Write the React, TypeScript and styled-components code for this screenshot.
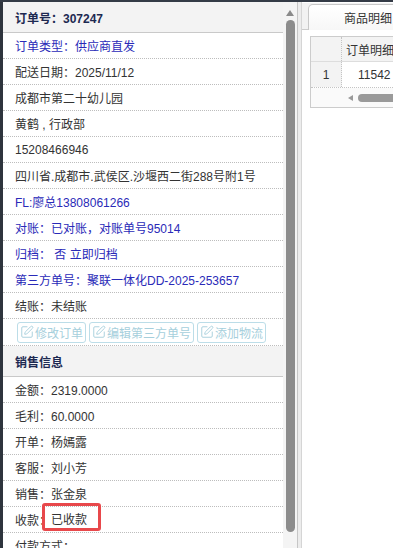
import styled, { createGlobalStyle } from "styled-components";
import { SquarePen } from "lucide-react";

const GlobalStyle = createGlobalStyle`
  html, body {
    margin: 0;
    padding: 0;
  }
  body {
    font-family: "Liberation Sans", "Noto Sans CJK SC", sans-serif;
    font-size: 12px;
    color: #333;
    background: #fff;
  }
`;

type Tone = "plain" | "link";

interface InfoLine {
  text: string;
  tone?: Tone;
}

const orderLines: InfoLine[] = [
  { text: "订单类型：供应商直发", tone: "link" },
  { text: "配送日期：2025/11/12" },
  { text: "成都市第二十幼儿园" },
  { text: "黄鹤 , 行政部" },
  { text: "15208466946" },
  { text: "四川省.成都市.武侯区.沙堰西二街288号附1号" },
  { text: "FL:廖总13808061266", tone: "link" },
  { text: "对账：已对账，对账单号95014", tone: "link" },
  { text: "归档： 否 立即归档", tone: "link" },
  { text: "第三方单号：聚联一体化DD-2025-253657", tone: "link" },
  { text: "结账：未结账" },
];

const salesLines: InfoLine[] = [
  { text: "金额：2319.0000" },
  { text: "毛利：60.0000" },
  { text: "开单：杨嫣露" },
  { text: "客服：刘小芳" },
  { text: "销售：张金泉" },
];

const actions = ["修改订单", "编辑第三方单号", "添加物流"];

const App = () => (
  <>
    <GlobalStyle />
    <Frame>
      <TopBar />
      <Body>
        <LeftEdge />
        <InfoPanel>
          <SectionHeader>订单号：307247</SectionHeader>
          {orderLines.map((line) => (
            <Row key={line.text} $tone={line.tone ?? "plain"}>
              {line.text}
            </Row>
          ))}
          <ButtonRow>
            {actions.map((label) => (
              <ActionButton key={label} type="button">
                <SquarePen size={14} strokeWidth={1.6} />
                {label}
              </ActionButton>
            ))}
          </ButtonRow>
          <SectionHeader>销售信息</SectionHeader>
          {salesLines.map((line) => (
            <Row key={line.text} $tone="plain">
              {line.text}
            </Row>
          ))}
          <Row $tone="plain">
            收款：<Marked>已收款</Marked>
          </Row>
          <Row $tone="plain">付款方式：</Row>
        </InfoPanel>
        <ScrollTrack>
          <UpArrow />
          <Thumb />
        </ScrollTrack>
        <Divider />
        <DetailPanel>
          <TabBar>
            <Tab>商品明细</Tab>
          </TabBar>
          <Table>
            <HeadRow>
              <NumCell />
              <Cell $indent={4}>订单明细</Cell>
            </HeadRow>
            <DataRow>
              <NumCell>1</NumCell>
              <Cell $indent={16}>11542</Cell>
            </DataRow>
            <HScrollRow>
              <LeftArrow />
              <HThumb />
            </HScrollRow>
          </Table>
        </DetailPanel>
      </Body>
    </Frame>
  </>
);

const Frame = styled.div`
  width: 393px;
  height: 548px;
  overflow: hidden;
  display: flex;
  flex-direction: column;
`;

const TopBar = styled.div`
  height: 2px;
  flex: none;
  background: #343b46;
`;

const Body = styled.div`
  flex: 1;
  min-height: 0;
  display: flex;
`;

const LeftEdge = styled.div`
  width: 3px;
  flex: none;
  background: #2e343d;
`;

const InfoPanel = styled.div`
  width: 280px;
  flex: none;
  overflow: hidden;
  background: #fff;
`;

const SectionHeader = styled.div`
  height: 31px;
  box-sizing: border-box;
  display: flex;
  align-items: center;
  padding: 0 12px;
  background: #f3f3f3;
  border-bottom: 1px solid #c9c9c9;
  color: #1d2951;
  font-weight: bold;
`;

const Row = styled.div<{ $tone: Tone }>`
  height: 26px;
  box-sizing: border-box;
  display: flex;
  align-items: center;
  padding-left: 12px;
  white-space: nowrap;
  border-bottom: 1px dotted #bdbdbd;
  color: ${({ $tone }) => ($tone === "link" ? "#2a2ab8" : "#333")};
`;

const Marked = styled.span`
  position: relative;
  display: inline-block;
  line-height: 14px;

  &::after {
    content: "";
    position: absolute;
    top: -10px;
    bottom: -4px;
    left: -9px;
    right: -14px;
    border: 3px solid #e8484b;
    border-radius: 3px;
  }
`;

const ButtonRow = styled.div`
  height: 27px;
  box-sizing: border-box;
  display: flex;
  align-items: center;
  gap: 3px;
  padding-left: 14px;
  border-bottom: 1px dotted #bdbdbd;
`;

const ActionButton = styled.button`
  height: 21px;
  box-sizing: border-box;
  display: inline-flex;
  align-items: center;
  gap: 1px;
  padding: 0 2px;
  margin: 0;
  background: #fff;
  border: 1px solid #bcdde8;
  border-radius: 3px;
  color: #a6cfdc;
  font-family: inherit;
  font-size: 12px;
  white-space: nowrap;
`;

const ScrollTrack = styled.div`
  width: 14px;
  flex: none;
  display: flex;
  flex-direction: column;
  align-items: center;
  padding-top: 8px;
  box-sizing: border-box;
  background: #f4f4f4;
`;

const UpArrow = styled.div`
  width: 0;
  height: 0;
  border-left: 4px solid transparent;
  border-right: 4px solid transparent;
  border-bottom: 6px solid #8a8a8a;
  margin-bottom: 4px;
`;

const Thumb = styled.div`
  width: 9px;
  height: 512px;
  border-radius: 5px;
  background: #8c8c8c;
`;

const Divider = styled.div`
  width: 4px;
  flex: none;
  box-sizing: border-box;
  background: #ececec;
  border-left: 1px solid #c6c6c6;
`;

const DetailPanel = styled.div`
  flex: 1;
  min-width: 0;
  overflow: hidden;
  background: #fff;
  border-left: 1px solid #d5d5d5;
  padding-left: 6px;
`;

const TabBar = styled.div`
  height: 27px;
  margin-top: 1px;
  box-sizing: border-box;
  display: flex;
  align-items: flex-end;
  background: #f2f2f2;
  border-bottom: 1px solid #cccccc;
  margin-left: -6px;
  padding-left: 6px;
`;

const Tab = styled.div`
  height: 26px;
  width: 120px;
  flex: none;
  box-sizing: border-box;
  display: flex;
  align-items: center;
  padding-left: 35px;
  margin-bottom: -1px;
  border: 1px solid #c8c8c8;
  border-bottom: none;
  border-radius: 5px 0 0 0;
  background: linear-gradient(#ffffff, #f7f7f7);
  color: #333;
  white-space: nowrap;
`;

const Table = styled.div`
  margin: 6px 0 0 2px;
  width: 120px;
  border: 1px solid #cccccc;
  border-right: none;
`;

const HeadRow = styled.div`
  height: 24px;
  display: flex;
  background: #f3f3f3;
  border-bottom: 1px solid #dddddd;
`;

const DataRow = styled.div`
  height: 25px;
  display: flex;
  border-bottom: 1px dotted #c4c4c4;
`;

const NumCell = styled.div`
  width: 30px;
  flex: none;
  display: flex;
  align-items: center;
  justify-content: center;
  background: #f3f3f3;
  border-right: 1px dotted #c4c4c4;
`;

const Cell = styled.div<{ $indent: number }>`
  display: flex;
  align-items: center;
  padding-left: ${({ $indent }) => $indent}px;
  white-space: nowrap;
`;

const HScrollRow = styled.div`
  height: 19px;
  display: flex;
  align-items: center;
  padding-left: 37px;
  background: #fafafa;
`;

const LeftArrow = styled.div`
  width: 0;
  height: 0;
  border-top: 3.5px solid transparent;
  border-bottom: 3.5px solid transparent;
  border-right: 5px solid #9a9a9a;
`;

const HThumb = styled.div`
  width: 70px;
  height: 8px;
  margin-left: 5px;
  border-radius: 4px;
  background: #9a9a9a;
`;

export default App;
